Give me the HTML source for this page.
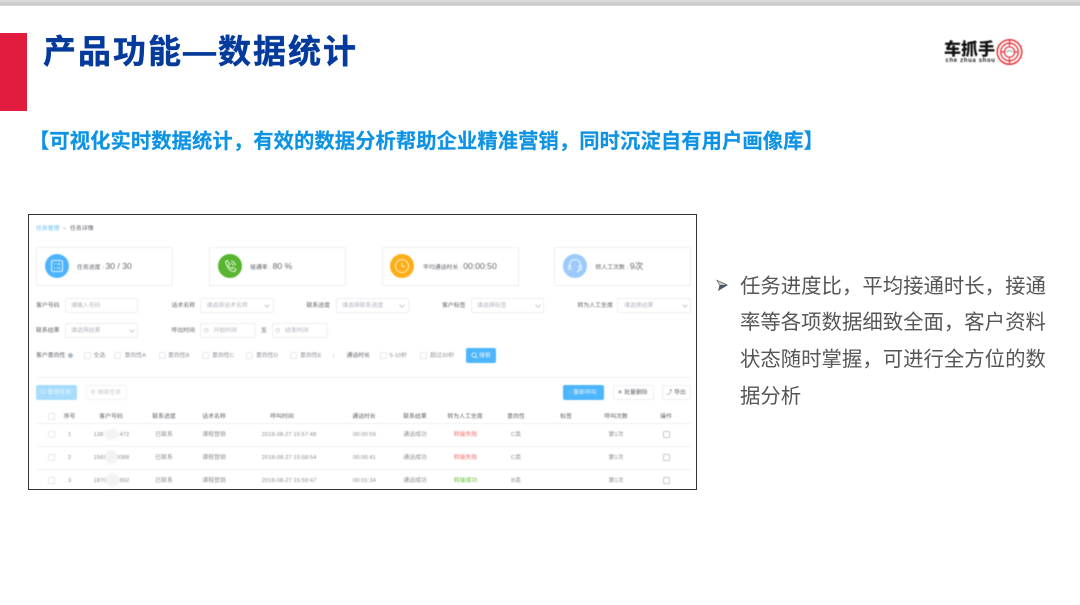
<!DOCTYPE html>
<html lang="zh-CN">
<head>
<meta charset="utf-8">
<title>产品功能—数据统计</title>
<style>
html,body{margin:0;padding:0;background:#fff}
body{width:1080px;height:605px;overflow:hidden;position:relative;font-family:"Liberation Sans","Noto Sans CJK SC",sans-serif}
.a{position:absolute;white-space:nowrap}
#top{left:0;top:0;width:1080px;height:6px;background:linear-gradient(#dedede,#c6c6c6 80%,#e2e2e2)}
#red{left:0;top:33px;width:27px;height:78px;background:#e21c3e}
#title{left:43px;top:30px;font-size:33px;line-height:44px;font-weight:700;letter-spacing:2px;color:#033a9b;-webkit-text-stroke:.4px #033a9b}
#sub{left:29px;top:127px;font-size:20.3px;line-height:30px;font-weight:700;letter-spacing:.1px;color:#0e93e4;-webkit-text-stroke:.2px #0e93e4}
#frame{left:28px;top:214px;width:667px;height:274px;border:1px solid #333;background:#fff;overflow:hidden}
#shot{position:absolute;left:-29px;top:-215px;width:1080px;height:605px;filter:blur(.55px)}
#shot .t{position:absolute;white-space:nowrap;font-size:5.9px;line-height:8px;color:#5e6168}
#shot .c{transform:translateX(-50%)}
#shot .g{color:#b0b4bc}
#shot .l{color:#8b8e94}
.card{position:absolute;top:247px;width:135px;height:37px;border:1px solid #eceef2;border-radius:1px}
.ic{position:absolute;top:254px;width:24px;height:24px;border-radius:50%}
.ic svg{position:absolute;left:0;top:0}
.n{font-size:8.6px;color:#666}
.in{position:absolute;height:14px;border:1px solid #eceef3;border-radius:2px;background:#fff;box-sizing:border-box;height:15px}
.cb{position:absolute;width:5px;height:5px;border:1px solid #e6e8ed;border-radius:1px;background:#fff}
.hl{position:absolute;left:36px;width:655px;height:1px;background:#eef0f5}
.arr{position:absolute;width:3px;height:3px;border-right:.7px solid #c8ccd2;border-bottom:.7px solid #c8ccd2;transform:rotate(45deg)}
.btn{position:absolute;height:15px;border-radius:2px;box-sizing:border-box}
.sm{position:absolute;background:#f3f3f4;border-radius:50%;filter:blur(1px)}
.op{position:absolute;left:663px;width:5px;height:5px;border:1px solid #c6c9ce;border-radius:1px}
#p{left:740px;top:268.500px;width:320px;font-size:20.400px;line-height:36.800px;color:#565656}
#p div{white-space:nowrap}
#logo{left:940px;top:34px;width:90px;height:36px;filter:blur(.4px)}
</style>
</head>
<body>
<div class="a" id="top"></div>
<div class="a" id="red"></div>
<div class="a" id="title">产品功能—数据统计</div>

<div class="a" id="logo">
<div class="a" style="left:4px;top:5px;font-size:17px;line-height:22px;font-weight:900;color:#111">车抓手</div>
<div class="a" style="left:5.500px;top:23px;font-size:6px;line-height:8px;font-weight:700;color:#222;letter-spacing:.65px">che zhua shou</div>
<svg class="a" style="left:56px;top:4px" width="28" height="28" viewBox="0 0 28 28" fill="none" stroke="#e5333a">
<circle cx="13.500" cy="14" r="12.300" stroke-width="1.500"/>
<circle cx="13.500" cy="14" r="8.800" stroke-width="1.300"/>
<circle cx="13.500" cy="14" r="5.200" stroke-width="1.200"/>
<path d="M13.500 2v6M13.500 20v6M5 14h3M19 14h3" stroke-width="1.200"/>
<path d="M9.500 14.500q4-4 8 0" stroke="#9dbcae" stroke-width="1.200"/>
</svg>
</div>

<div class="a" id="sub">【可视化实时数据统计，有效的数据分析帮助企业精准营销，同时沉淀自有用户画像库】</div>

<div class="a" id="frame">
<div id="shot">
<span class="t" style="left:36px;top:224.500px;color:#6cbcf5">任务管理</span>
<span class="t" style="left:63px;top:224.500px;color:#b5b8bf">&gt;</span>
<span class="t" style="left:70px;top:224.500px">任务详情</span>

<div class="card" style="left:36px"></div>
<div class="card" style="left:209px"></div>
<div class="card" style="left:381.500px"></div>
<div class="card" style="left:554px"></div>

<div class="ic" style="left:45px;background:#4db4fb"><svg width="24" height="24" fill="none" stroke="#dff2ff" stroke-width="1"><rect x="6.500" y="6.500" width="11" height="11" rx="1.500"/><path d="M9 10h1M12 10h3.500M9 14h1M12 14h3.500"/></svg></div>
<div class="ic" style="left:217.500px;background:#57b52f"><svg width="24" height="24" fill="none" stroke="#e4f5dc" stroke-width="1"><path d="M7.500 7.500l2-1 2 3.500-1.200 1.200q1 2.500 3.500 3.500l1.200-1.200 3 2-1 2q-7 .5-9.500-10z"/><path d="M13 7q4 .5 4.500 4.500M13 9.500q2 .3 2.300 2.300"/></svg></div>
<div class="ic" style="left:390px;background:#fdad15"><svg width="24" height="24" fill="none" stroke="#ffeec8" stroke-width="1"><circle cx="12" cy="12" r="6.500"/><path d="M12 8.500V12.500h3"/></svg></div>
<div class="ic" style="left:563px;background:#9ccbfb"><svg width="24" height="24" fill="none" stroke="#eaf4ff" stroke-width="1"><path d="M6.500 13v-2a5.500 5.500 0 0 1 11 0v2"/><rect x="5.500" y="11.500" width="2.500" height="4" rx="1.200"/><rect x="16" y="11.500" width="2.500" height="4" rx="1.200"/><path d="M17 15.500q-.5 2-3.500 2.200"/></svg></div>

<span class="t" style="left:77px;top:262px">任务进度 : <span class="n">30 / 30</span></span>
<span class="t" style="left:250px;top:262px">接通率 : <span class="n">80 %</span></span>
<span class="t" style="left:423px;top:262px">平均通话时长 : <span class="n">00:00:50</span></span>
<span class="t" style="left:595.500px;top:262px">转人工次数 : <span class="n">9次</span></span>

<span class="t" style="left:36px;top:302px">客户号码</span>
<div class="in" style="left:64.500px;top:298px;width:73.500px"></div><span class="t g" style="left:71px;top:302px">请输入号码</span>
<span class="t" style="left:171.500px;top:302px">话术名称</span>
<div class="in" style="left:200px;top:298px;width:73.500px"></div><span class="t g" style="left:206.500px;top:302px">请选择话术名称</span><div class="arr" style="left:265px;top:303px"></div>
<span class="t" style="left:306.500px;top:302px">联系进度</span>
<div class="in" style="left:335.500px;top:298px;width:73.500px"></div><span class="t g" style="left:342px;top:302px">请选择联系进度</span><div class="arr" style="left:400px;top:303px"></div>
<span class="t" style="left:442px;top:302px">客户标签</span>
<div class="in" style="left:470.500px;top:298px;width:73.500px"></div><span class="t g" style="left:477px;top:302px">请选择标签</span><div class="arr" style="left:535.500px;top:303px"></div>
<span class="t" style="left:577.500px;top:302px">转为人工坐席</span>
<div class="in" style="left:617px;top:298px;width:74px"></div><span class="t g" style="left:624px;top:302px">请选择结果</span><div class="arr" style="left:682.500px;top:303px"></div>

<span class="t" style="left:36px;top:327px">联系结果</span>
<div class="in" style="left:64.500px;top:323px;width:73.500px"></div><span class="t g" style="left:71px;top:327px">请选择结果</span><div class="arr" style="left:130px;top:328px"></div>
<span class="t" style="left:171.500px;top:327px">呼出时间</span>
<div class="in" style="left:200px;top:323px;width:56px"></div><span class="t g" style="left:203.500px;top:327px">◷</span><span class="t g" style="left:213.500px;top:327px">开始时间</span>
<span class="t" style="left:261px;top:327px">至</span>
<div class="in" style="left:271.500px;top:323px;width:56px"></div><span class="t g" style="left:275px;top:327px">◷</span><span class="t g" style="left:285px;top:327px">结束时间</span>

<span class="t" style="left:36px;top:351.500px">客户意向性</span>
<div class="a" style="left:67.500px;top:353px;width:5px;height:5px;border-radius:50%;background:#a9bbcf"></div>
<div class="cb" style="left:83.500px;top:352px"></div><span class="t l" style="left:93.500px;top:351.500px">全选</span>
<div class="cb" style="left:114px;top:352px"></div><span class="t l" style="left:124.500px;top:351.500px">意向性A</span>
<div class="cb" style="left:158.500px;top:352px"></div><span class="t l" style="left:168px;top:351.500px">意向性B</span>
<div class="cb" style="left:202px;top:352px"></div><span class="t l" style="left:212px;top:351.500px">意向性C</span>
<div class="cb" style="left:246px;top:352px"></div><span class="t l" style="left:256px;top:351.500px">意向性D</span>
<div class="cb" style="left:290px;top:352px"></div><span class="t l" style="left:300px;top:351.500px">意向性E</span>
<span class="t" style="left:333px;top:351.500px;color:#ccc">|</span>
<span class="t" style="left:346.500px;top:351.500px">通话时长</span>
<div class="cb" style="left:379.500px;top:352px"></div><span class="t l" style="left:389.500px;top:351.500px">5-10秒</span>
<div class="cb" style="left:420px;top:352px"></div><span class="t l" style="left:430px;top:351.500px">超过30秒</span>
<div class="btn" style="left:466px;top:348px;width:30px;background:#4db5fb"></div>
<svg class="a" style="left:471px;top:352px" width="7" height="7" fill="none" stroke="#e6f5ff" stroke-width=".8"><circle cx="3" cy="3" r="2.200"/><path d="M4.600 4.600L6.300 6.300"/></svg>
<span class="t" style="left:479px;top:351.500px;color:#e6f5ff">搜索</span>

<div class="hl" style="top:376.500px"></div>

<div class="btn" style="left:36px;top:385px;width:41px;background:#a8dcfc"></div><span class="t" style="left:40px;top:389px;color:#eaf7ff">⊙ 暂停任务</span>
<div class="btn" style="left:85.500px;top:385px;width:41px;border:1px solid #f0f2f5"></div><span class="t" style="left:90px;top:389px;color:#c3c7ce">⊕ 继续任务</span>
<div class="btn" style="left:563px;top:385px;width:41px;background:#4db5fb"></div><span class="t" style="left:568px;top:389px;color:#e6f5ff">◌ 重新呼叫</span>
<div class="btn" style="left:612.500px;top:385px;width:41px;border:1px solid #eceef2"></div><span class="t" style="left:617.500px;top:389px">✕ 批量删除</span>
<div class="btn" style="left:662px;top:385px;width:29px;border:1px solid #eceef2"></div><span class="t" style="left:666.500px;top:389px">⤴ 导出</span>

<div class="cb" style="left:48px;top:413px"></div>
<span class="t c" style="left:69.500px;top:412.500px">序号</span>
<span class="t c" style="left:111px;top:412.500px">客户号码</span>
<span class="t c" style="left:164px;top:412.500px">联系进度</span>
<span class="t c" style="left:214px;top:412.500px">话术名称</span>
<span class="t c" style="left:282px;top:412.500px">呼叫时间</span>
<span class="t c" style="left:364px;top:412.500px">通话时长</span>
<span class="t c" style="left:415px;top:412.500px">联系结果</span>
<span class="t c" style="left:465px;top:412.500px">转为人工坐席</span>
<span class="t c" style="left:516px;top:412.500px">意向性</span>
<span class="t c" style="left:566px;top:412.500px">标签</span>
<span class="t c" style="left:616px;top:412.500px">呼叫次数</span>
<span class="t c" style="left:666px;top:412.500px">操作</span>
<div class="hl" style="top:422.500px"></div>

<div class="cb" style="left:48px;top:431px"></div>
<span class="t c l" style="left:69.500px;top:430.500px">1</span>
<span class="t l" style="left:93.500px;top:430.500px">138</span><span class="t l" style="left:119.500px;top:430.500px">472</span>
<div class="sm" style="left:104px;top:429px;width:15px;height:11px"></div>
<span class="t c l" style="left:164px;top:430.500px">已联系</span>
<span class="t c l" style="left:214px;top:430.500px">课程营销</span>
<span class="t c l" style="left:289px;top:430.500px">2018-08-27 15:57:48</span>
<span class="t c l" style="left:364.500px;top:430.500px">00:00:59</span>
<span class="t c l" style="left:415px;top:430.500px">通话成功</span>
<span class="t c" style="left:465.500px;top:430.500px;color:#f56c6c">转接失败</span>
<span class="t c l" style="left:516px;top:430.500px">C类</span>
<span class="t c l" style="left:616px;top:430.500px">第1次</span>
<div class="op" style="top:431px"></div>
<div class="hl" style="top:445.500px"></div>

<div class="cb" style="left:48px;top:454px"></div>
<span class="t c l" style="left:69.500px;top:453.500px">2</span>
<span class="t l" style="left:93.500px;top:453.500px">1565</span><span class="t l" style="left:116px;top:453.500px">3088</span>
<div class="sm" style="left:105px;top:450px;width:13px;height:14px"></div>
<span class="t c l" style="left:164px;top:453.500px">已联系</span>
<span class="t c l" style="left:214px;top:453.500px">课程营销</span>
<span class="t c l" style="left:289px;top:453.500px">2018-08-27 15:58:54</span>
<span class="t c l" style="left:364.500px;top:453.500px">00:00:41</span>
<span class="t c l" style="left:415px;top:453.500px">通话成功</span>
<span class="t c" style="left:465.500px;top:453.500px;color:#f56c6c">转接失败</span>
<span class="t c l" style="left:516px;top:453.500px">C类</span>
<span class="t c l" style="left:616px;top:453.500px">第1次</span>
<div class="op" style="top:454px"></div>
<div class="hl" style="top:468.500px"></div>

<div class="cb" style="left:48px;top:477px"></div>
<span class="t c l" style="left:69.500px;top:476.500px">3</span>
<span class="t l" style="left:93.500px;top:476.500px">1870</span><span class="t l" style="left:119.500px;top:476.500px">892</span>
<div class="sm" style="left:106px;top:473px;width:13px;height:14px"></div>
<span class="t c l" style="left:164px;top:476.500px">已联系</span>
<span class="t c l" style="left:214px;top:476.500px">课程营销</span>
<span class="t c l" style="left:289px;top:476.500px">2018-08-27 15:59:47</span>
<span class="t c l" style="left:364.500px;top:476.500px">00:01:34</span>
<span class="t c l" style="left:415px;top:476.500px">通话成功</span>
<span class="t c" style="left:465.500px;top:476.500px;color:#67c23a">转接成功</span>
<span class="t c l" style="left:516px;top:476.500px">B类</span>
<span class="t c l" style="left:616px;top:476.500px">第1次</span>
<div class="op" style="top:477px"></div>
</div>
</div>

<svg class="a" style="left:715px;top:278px" width="14" height="14" viewBox="0 0 14 14"><path d="M1 1.500L13 7 3 13l1.500-5.500z" fill="#4c5560"/><path d="M2.500 2.800L11 7 4.800 7z" fill="#c5c9ce"/></svg>
<div class="a" id="p">
<div>任务进度比，平均接通时长，接通</div>
<div>率等各项数据细致全面，客户资料</div>
<div>状态随时掌握，可进行全方位的数</div>
<div>据分析</div>
</div>
</body>
</html>
